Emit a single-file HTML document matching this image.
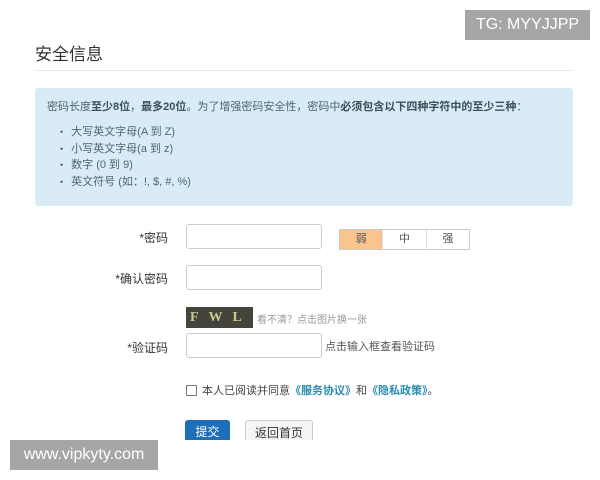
<!DOCTYPE html>
<html><head><meta charset="utf-8"><style>
body{margin:0;width:600px;height:480px;background:#fff;position:relative;overflow:hidden;font-family:"Liberation Sans","Noto Sans CJK SC",sans-serif;color:#555}
.a{position:absolute}
.title{left:35px;top:40px;font-size:17px;color:#333}
.hr{left:35px;top:70px;width:538px;height:1px;background:#e8e8e8}
.info{left:35px;top:88px;width:538px;height:118px;background:#d9ecf5;border-radius:3px}
.info p{margin:0;position:absolute;left:12px;top:10px;font-size:11px;color:#4f6570;white-space:nowrap}
.info p b{color:#3a4f5a}
.info ul{margin:0;padding:0;list-style:none;position:absolute;left:25px;top:36px;font-size:11px;color:#4f6570;line-height:16.7px}
.info li:before{content:"•";margin-right:8px;font-size:9px}
.lab{font-size:12px;color:#333;text-align:right;width:80px}
.inp{left:186px;width:134px;height:23px;border:1px solid #ccc;border-radius:3px;background:#fff}
.str{left:339px;top:229px;width:129px;height:19px;border:1px solid #ccc;display:flex;font-size:11px}
.str div{flex:1;text-align:center;line-height:19px;border-left:1px solid #ddd}
.wm{background:#a6a6a6;color:#fff;font-size:16px;line-height:30px;text-align:center}
</style></head><body>
<div class="a wm" style="left:465px;top:10px;width:125px">TG: MYYJJPP</div>
<div class="a title">安全信息</div>
<div class="a hr"></div>
<div class="a info"><p>密码长度<b>至少8位</b>，<b>最多20位</b>。为了增强密码安全性，密码中<b>必须包含以下四种字符中的至少三种</b>：</p>
<ul><li>大写英文字母(A 到 Z)</li><li>小写英文字母(a 到 z)</li><li>数字 (0 到 9)</li><li>英文符号 (如：!, $, #, %)</li></ul></div>
<div class="a lab" style="left:88px;top:229px">*密码</div>
<div class="a inp" style="top:224px"></div>
<div class="a str"><div style="background:#f9c48e;border-left:none">弱</div><div>中</div><div>强</div></div>
<div class="a lab" style="left:88px;top:270px">*确认密码</div>
<div class="a inp" style="top:265px"></div>
<div class="a" style="left:186px;top:307px;width:67px;height:21px;background:#45443a;color:#c8c890;font:bold 14px 'Liberation Serif',serif;letter-spacing:10px;line-height:21px;padding-left:4px;box-sizing:border-box">FWL</div>
<div class="a" style="left:257px;top:311px;font-size:10px;color:#999">看不清？点击图片换一张</div>
<div class="a lab" style="left:88px;top:339px">*验证码</div>
<div class="a inp" style="top:333px"></div>
<div class="a" style="left:325px;top:338px;font-size:11px;color:#555">点击输入框查看验证码</div>
<div class="a" style="left:186px;top:385px;width:9px;height:9px;border:1px solid #777;border-radius:1px"></div>
<div class="a" style="left:202px;top:382px;font-size:11px;color:#444">本人已阅读并同意<b style="color:#2a8ab0">《服务协议》</b>和<b style="color:#2a8ab0">《隐私政策》</b>。</div>
<div class="a" style="left:185px;top:420px;width:45px;height:30px;background:#1d6fb8;border-radius:3px;color:#fff;font-size:12px;text-align:center;line-height:24px">提交</div>
<div class="a" style="left:245px;top:420px;width:68px;height:30px;background:#f5f5f5;border:1px solid #ccc;border-radius:3px;color:#333;font-size:12px;text-align:center;line-height:24px;box-sizing:border-box">返回首页</div>
<div class="a" style="left:0;top:440px;width:600px;height:40px;background:#fff"></div>
<div class="a wm" style="left:10px;top:440px;width:148px">www.vipkyty.com</div>
</body></html>
